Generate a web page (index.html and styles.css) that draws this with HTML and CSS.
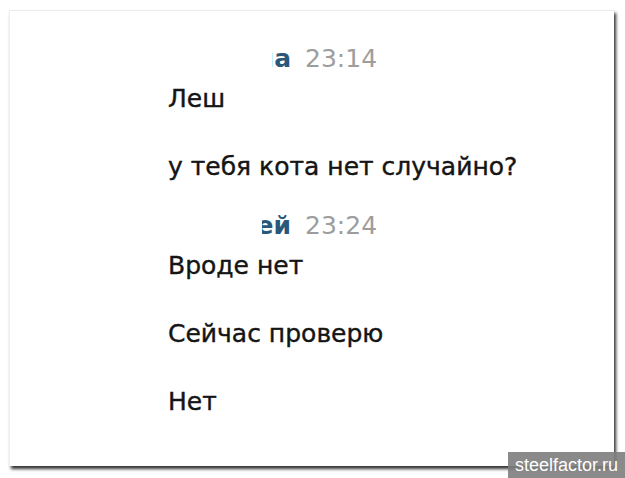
FILE: index.html
```html
<!DOCTYPE html>
<html lang="ru">
<head>
    <meta charset="UTF-8">
    <meta name="viewport" content="width=device-width, initial-scale=1.0">
    <title>Диалог</title>
    <link rel="stylesheet" href="styles.css">
</head>
<body>

    <div class="shot">
        <div class="dialog">
            <div class="msgGroup">
                <div class="msgHead">
                    <span class="author author-first">Анна</span>
                    <span class="time">23:14</span>
                </div>
                <div class="msgText">Леш</div>
                <div class="msgText">у тебя кота нет случайно?</div>
            </div>
            <div class="msgGroup">
                <div class="msgHead">
                    <span class="author author-second">Алексей</span>
                    <span class="time">23:24</span>
                </div>
                <div class="msgText">Вроде нет</div>
                <div class="msgText">Сейчас проверю</div>
                <div class="msgText">Нет</div>
            </div>
        </div>
    </div>

    <div class="watermark">steelfactor.ru</div>

</body>
</html>
```

FILE: styles.css
```css
body {
    margin: 0;
    background-color: #fff;
    font-family: 'DejaVu Sans', 'Noto Sans', sans-serif;
    color: #151515;
}
.shot {
    padding: 10px 0 12px 9px;
}
.dialog {
    width: 605px;
    height: 456px;
    box-sizing: border-box;
    background: #fff;
    border-top: 1px solid #ececec;
    border-left: 1px solid #f0f0f0;
    box-shadow: 2px 3px 3px rgba(0, 0, 0, 0.8);
    padding: 33px 0 0 158px;
}
.msgGroup {
    display: flex;
    flex-direction: column;
    gap: 38px;
    margin-bottom: 29px;
}
.msgHead {
    display: flex;
    align-items: baseline;
    font-size: 25px;
    line-height: 30px;
    margin-bottom: -28px;
}
.author {
    display: inline-block;
    overflow: hidden;
    white-space: nowrap;
    direction: rtl;
    font-weight: bold;
    color: #2b587a;
    margin-right: 14px;
}
.author-first {
    margin-left: 104px;
    width: 19px;
}
.author-second {
    margin-left: 94px;
    width: 29px;
}
.time {
    color: #9d9d9d;
}
.msgText {
    font-size: 25px;
    line-height: 30px;
    -webkit-text-stroke: 0.4px #151515;
}
.watermark {
    position: absolute;
    right: 0;
    bottom: 0;
    width: 117px;
    height: 26px;
    background: rgba(125, 125, 125, 0.9);
    color: #fff;
    font-family: 'Liberation Sans', sans-serif;
    font-size: 18px;
    line-height: 26px;
    text-align: center;
}
```
